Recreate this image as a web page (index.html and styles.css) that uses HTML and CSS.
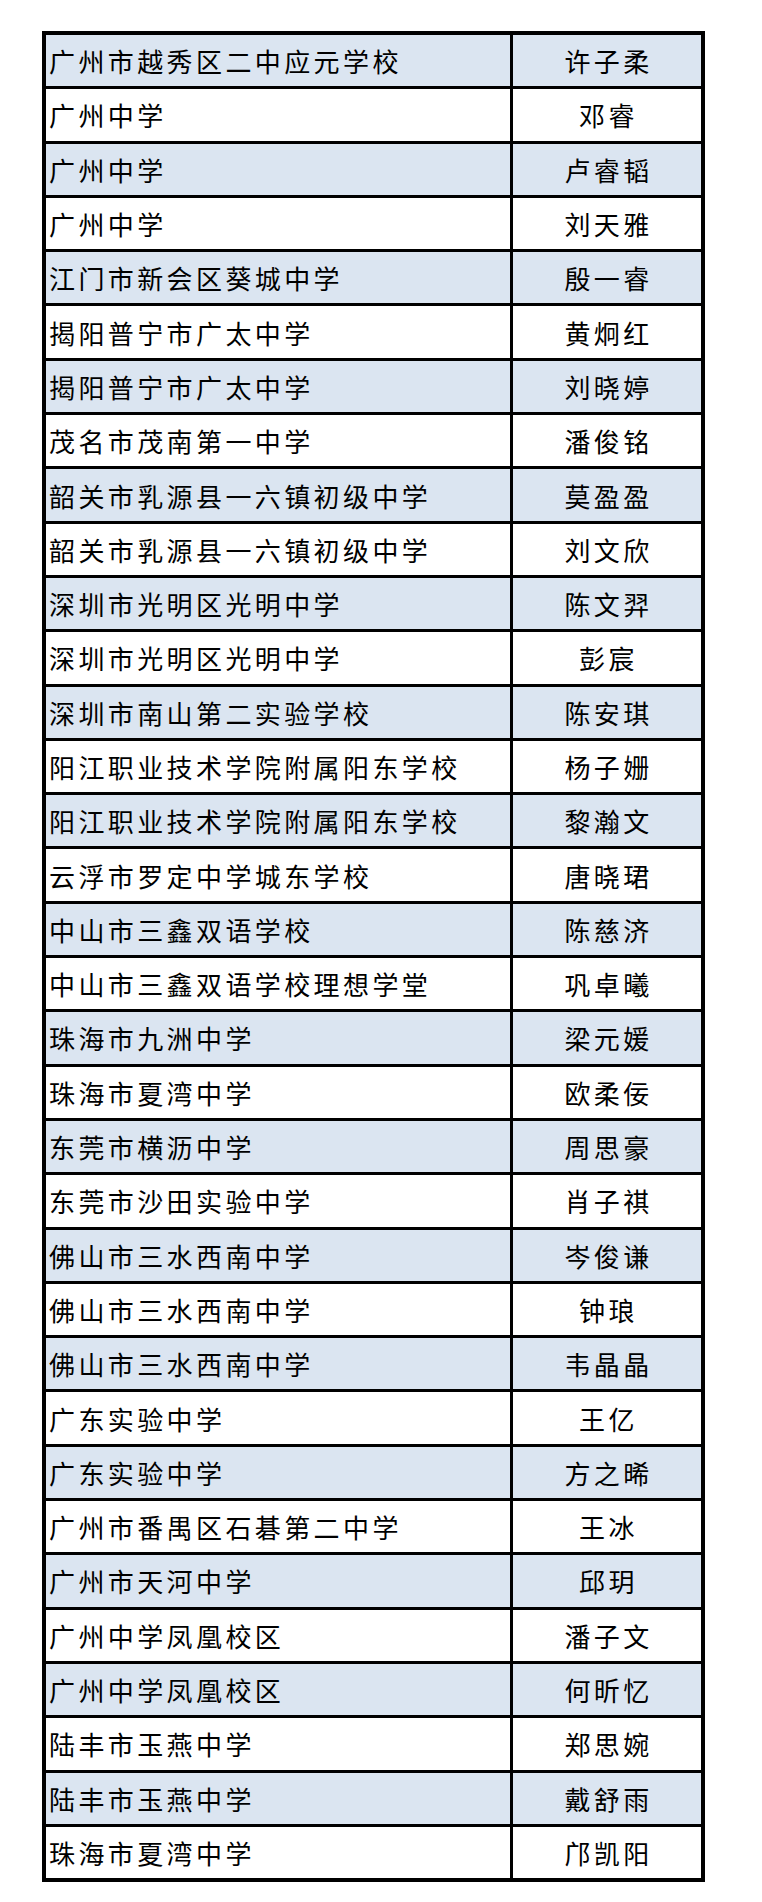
FILE: index.html
```html
<!DOCTYPE html>
<html lang="zh-CN">
<head>
<meta charset="utf-8">
<title>名单</title>
<link rel="stylesheet" href="styles.css">
</head>
<body>
<div class="sheet">
<div class="cell school blue">广州市越秀区二中应元学校</div><div class="cell name blue">许子柔</div>
<div class="cell school">广州中学</div><div class="cell name">邓睿</div>
<div class="cell school blue">广州中学</div><div class="cell name blue">卢睿韬</div>
<div class="cell school">广州中学</div><div class="cell name">刘天雅</div>
<div class="cell school blue">江门市新会区葵城中学</div><div class="cell name blue">殷一睿</div>
<div class="cell school">揭阳普宁市广太中学</div><div class="cell name">黄炯红</div>
<div class="cell school blue">揭阳普宁市广太中学</div><div class="cell name blue">刘晓婷</div>
<div class="cell school">茂名市茂南第一中学</div><div class="cell name">潘俊铭</div>
<div class="cell school blue">韶关市乳源县一六镇初级中学</div><div class="cell name blue">莫盈盈</div>
<div class="cell school">韶关市乳源县一六镇初级中学</div><div class="cell name">刘文欣</div>
<div class="cell school blue">深圳市光明区光明中学</div><div class="cell name blue">陈文羿</div>
<div class="cell school">深圳市光明区光明中学</div><div class="cell name">彭宸</div>
<div class="cell school blue">深圳市南山第二实验学校</div><div class="cell name blue">陈安琪</div>
<div class="cell school">阳江职业技术学院附属阳东学校</div><div class="cell name">杨子姗</div>
<div class="cell school blue">阳江职业技术学院附属阳东学校</div><div class="cell name blue">黎瀚文</div>
<div class="cell school">云浮市罗定中学城东学校</div><div class="cell name">唐晓珺</div>
<div class="cell school blue">中山市三鑫双语学校</div><div class="cell name blue">陈慈济</div>
<div class="cell school">中山市三鑫双语学校理想学堂</div><div class="cell name">巩卓曦</div>
<div class="cell school blue">珠海市九洲中学</div><div class="cell name blue">梁元媛</div>
<div class="cell school">珠海市夏湾中学</div><div class="cell name">欧柔佞</div>
<div class="cell school blue">东莞市横沥中学</div><div class="cell name blue">周思豪</div>
<div class="cell school">东莞市沙田实验中学</div><div class="cell name">肖子祺</div>
<div class="cell school blue">佛山市三水西南中学</div><div class="cell name blue">岑俊谦</div>
<div class="cell school">佛山市三水西南中学</div><div class="cell name">钟琅</div>
<div class="cell school blue">佛山市三水西南中学</div><div class="cell name blue">韦晶晶</div>
<div class="cell school">广东实验中学</div><div class="cell name">王亿</div>
<div class="cell school blue">广东实验中学</div><div class="cell name blue">方之晞</div>
<div class="cell school">广州市番禺区石碁第二中学</div><div class="cell name">王冰</div>
<div class="cell school blue">广州市天河中学</div><div class="cell name blue">邱玥</div>
<div class="cell school">广州中学凤凰校区</div><div class="cell name">潘子文</div>
<div class="cell school blue">广州中学凤凰校区</div><div class="cell name blue">何昕忆</div>
<div class="cell school">陆丰市玉燕中学</div><div class="cell name">郑思婉</div>
<div class="cell school blue">陆丰市玉燕中学</div><div class="cell name blue">戴舒雨</div>
<div class="cell school">珠海市夏湾中学</div><div class="cell name">邝凯阳</div>
</div>
</body>
</html>
```
FILE: styles.css
```css
html, body {
  margin: 0;
  padding: 0;
  background: #ffffff;
}
body {
  padding: 31px 0 0 42px;
  font-family: "Noto Sans CJK SC", "Noto Sans", sans-serif;
}
.sheet {
  display: grid;
  grid-template-columns: 464px 188px;
  grid-auto-rows: 51.3px;
  gap: 3px;
  width: 655px;
  border: 4px solid #000;
  background: #000;
}
.cell {
  background: #ffffff;
  color: #000;
  font-size: 26px;
  letter-spacing: 3.4px;
  display: flex;
  align-items: center;
  white-space: nowrap;
}
.cell.blue {
  background: #dbe5f1;
}
.school {
  padding-left: 3px;
}
.name {
  justify-content: center;
  padding-left: 3px;
}
```
